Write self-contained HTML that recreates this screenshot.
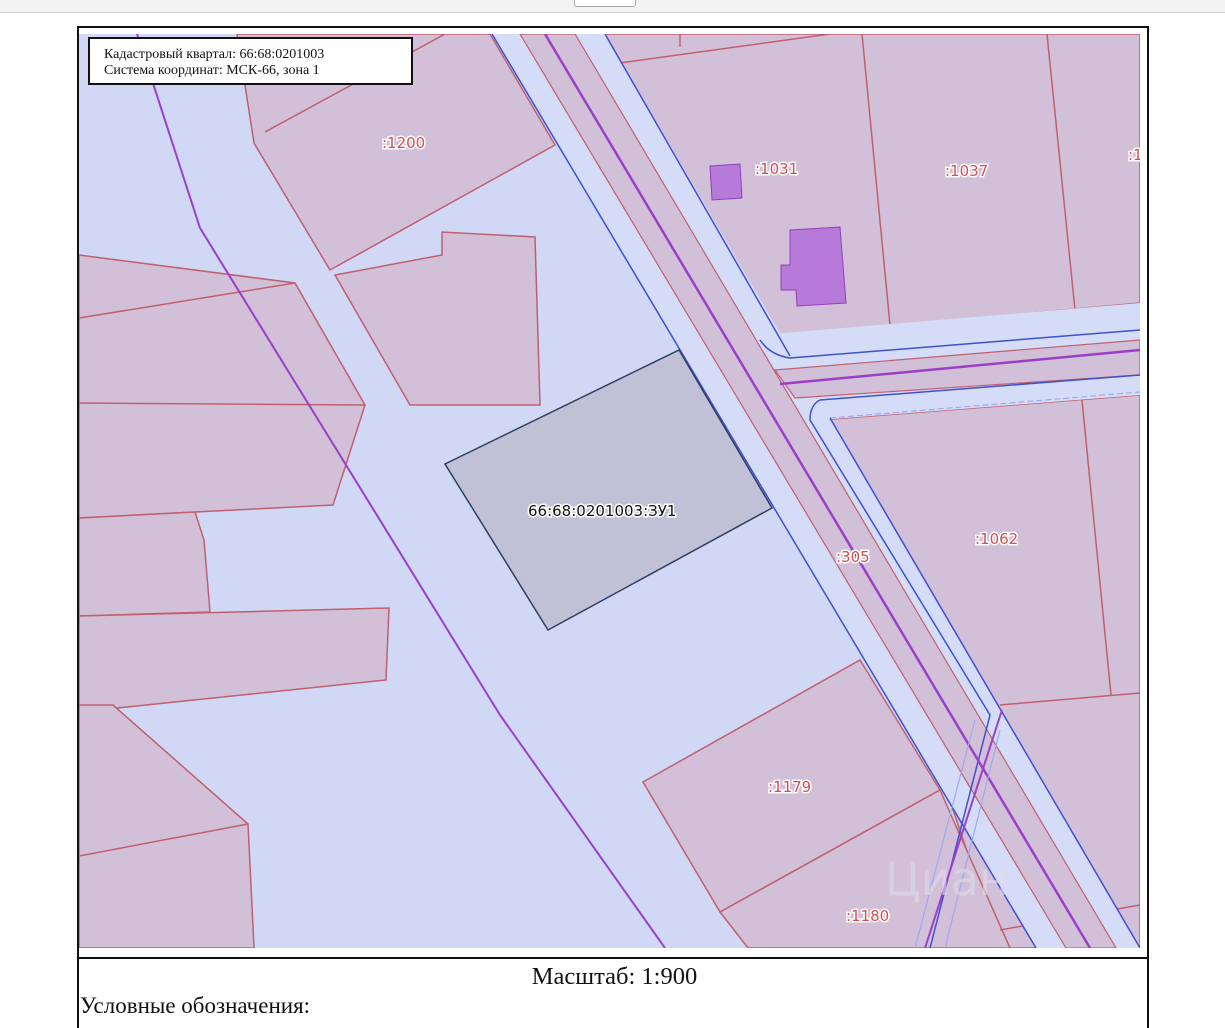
<!DOCTYPE html>
<html><head><meta charset="utf-8"><style>
html,body{margin:0;padding:0;background:#fff;width:1225px;height:1015px;overflow:hidden;font-family:"Liberation Serif",serif}
.top{position:absolute;left:0;top:0;width:1225px;height:12px;background:#f3f3f3;border-bottom:1px solid #d0d0d0}
.btn{position:absolute;left:574px;top:-4px;width:60px;height:9px;border:1px solid #aaa;border-radius:3px;background:#fff}
.frame{position:absolute;left:77px;top:26px;width:1068px;height:1000px;border:2px solid #111;border-bottom:none}
.sep{position:absolute;left:77px;top:957px;width:1070px;height:2px;background:#111}
.scale{position:absolute;left:0;width:1225px;top:963px;text-align:center;font-size:24.5px;color:#111;padding-left:4px;box-sizing:border-box}
.leg{position:absolute;left:80px;top:993px;font-size:23px;color:#111}
.info{position:absolute;left:88px;top:37px;width:325px;height:48px;border:2px solid #111;background:#fff;font-size:14px;line-height:16px;padding:8px 0 0 14px;box-sizing:border-box;color:#111}
svg text{font-family:"DejaVu Sans","Liberation Sans",sans-serif;font-size:15px;fill:#d05050;stroke:#fff;stroke-width:3px;paint-order:stroke}
</style></head><body>
<div class="top"><div class="btn"></div></div>
<div class="frame"></div>
<svg width="1225" height="1015" style="position:absolute;left:0;top:0">
<defs><clipPath id="c"><rect x="79" y="34" width="1061" height="914"/></clipPath></defs>
<g clip-path="url(#c)">
<rect x="79" y="34" width="1061" height="914" fill="#d0d8f6"/>
<g fill="#d2bfd8" stroke="#c0606e" stroke-width="1.5">
<polygon points="237,34 490,34 555,145 330,270 254,143"/>
<polygon points="335,275 442,255 442,232 535,237 540,405 410,405"/>
<polygon points="79,255 295,283 365,405 333,505 195,512 79,518"/>
<polygon points="79,518 195,512 204,540 210,612 79,616"/>
<polygon points="79,616 389,608 386,680 79,712"/>
<polygon points="79,705 113,705 248,824 254,948 79,948"/>
<polygon points="605,34 1140,34 1140,303 790,335 760,335"/>
<polygon points="820,420 1140,395 1140,948 1000,948"/>
<polygon points="643,782 860,660 940,790 720,912"/>
<polygon points="720,912 940,790 1010,948 748,948"/>
</g>
<g stroke="#c0606e" stroke-width="1.5" fill="none">
<line x1="265" y1="132" x2="445" y2="34"/>
<line x1="79" y1="318" x2="295" y2="283"/>
<line x1="79" y1="403" x2="365" y2="405"/>
<line x1="79" y1="856" x2="248" y2="824"/>
<line x1="862" y1="34" x2="890" y2="325"/>
<line x1="1047" y1="34" x2="1075" y2="310"/>
<line x1="612" y1="64" x2="830" y2="34"/>
<line x1="680" y1="34" x2="680" y2="47"/>
<line x1="1082" y1="400" x2="1111" y2="695"/>
<line x1="1000" y1="705" x2="1140" y2="693"/>
<line x1="1000" y1="930" x2="1140" y2="905"/>
</g>
<polygon points="492,34 605,34 1140,948 1036,948" fill="#d4dcf8"/>
<polygon points="520,34 575,34 1116,948 1066,948" fill="#d2bfd8" stroke="#c0606e" stroke-width="1.2"/>
<polygon points="760,335 1140,303 1140,395 820,420" fill="#d4dcf8"/>
<polygon points="775,370 1140,340 1140,375 795,398" fill="#d2bfd8" stroke="#c0606e" stroke-width="1.2"/>
<line x1="780" y1="384" x2="1140" y2="350" stroke="#9a40c8" stroke-width="2.5"/>
<line x1="830" y1="418" x2="1140" y2="392" stroke="#9aa0e8" stroke-width="1" stroke-dasharray="6 3"/>
<line x1="492" y1="34" x2="1036" y2="948" stroke="#4050d0" stroke-width="1.5"/>
<path d="M605,34 L790,356 M760,340 Q770,355 790,358 L1140,330 M820,400 Q810,405 810,420 L990,715 L930,948" stroke="#4050d0" stroke-width="1.5" fill="none"/>
<path d="M820,400 L1140,375 M830,418 L1140,948" stroke="#4050d0" stroke-width="1.5" fill="none"/>
<line x1="545" y1="34" x2="1090" y2="948" stroke="#9a40c8" stroke-width="2.5"/>
<line x1="1002" y1="710" x2="925" y2="948" stroke="#9a40c8" stroke-width="2"/>
<path d="M975,720 L915,948 M1000,730 L945,948" stroke="#a0a8f0" stroke-width="1.2" fill="none"/>
<polyline points="137,34 200,228 500,715 665,948" fill="none" stroke="#9a40c8" stroke-width="2"/>
<polygon points="710,166 740,164 742,198 712,200" fill="#b87ad8" stroke="#9040c0"/>
<polygon points="790,230 840,227 846,303 797,306 796,290 781,290 781,265 790,265" fill="#b87ad8" stroke="#9040c0"/>
<polygon points="445,464 679,350 772,508 548,630" fill="#c0c0d6" stroke="#304060" stroke-width="1.5"/>
<text x="528" y="516" style="fill:#111;font-size:15px">66:68:0201003:ЗУ1</text>
<text x="382" y="148">:1200</text>
<text x="755" y="174">:1031</text>
<text x="945" y="176">:1037</text>
<text x="1128" y="160">:1</text>
<text x="975" y="544">:1062</text>
<text x="836" y="562">:305</text>
<text x="768" y="792">:1179</text>
<text x="846" y="921">:1180</text>
<text x="885" y="895" style="fill:#e0dcee;stroke:none;font-size:46px;opacity:.6">Циан</text>
</g>
</svg>
<div class="info">Кадастровый квартал: 66:68:0201003<br>Система координат: МСК-66, зона 1</div>
<div class="sep"></div>
<div class="scale">Масштаб: 1:900</div>
<div class="leg">Условные обозначения:</div>
</body></html>
